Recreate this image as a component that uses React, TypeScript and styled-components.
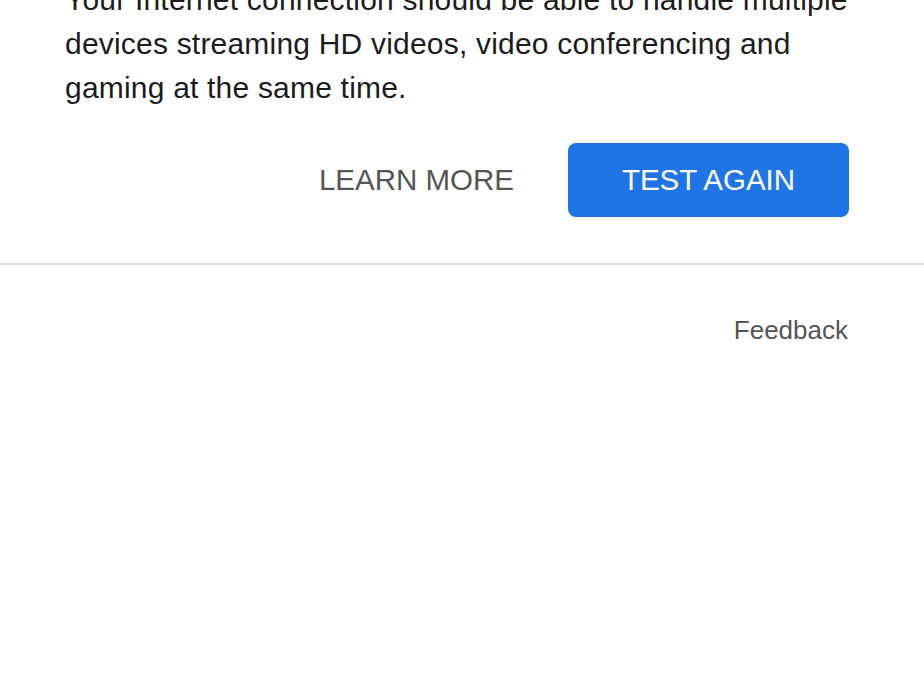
import React from "react";
import styled, { createGlobalStyle } from "styled-components";

const Global = createGlobalStyle`
  html, body { margin: 0; padding: 0; background: #ffffff; }
  body { font-family: "Liberation Sans", Arial, Helvetica, sans-serif; overflow: hidden; }
`;

const Page = styled.div`
  width: 924px;
  height: 700px;
  background: #fff;
  display: flex;
  flex-direction: column;
`;

const Result = styled.section`
  padding: 0 75px 46px 65px;
  display: flex;
  flex-direction: column;
`;

const Message = styled.p`
  margin: -22px -10px 0 0;
  font-size: 30px;
  line-height: 44px;
  color: #1c1c1c;
  letter-spacing: 0.2px;
`;

const Actions = styled.div`
  margin-top: 33px;
  display: flex;
  justify-content: flex-end;
  align-items: center;
  gap: 54px;
`;

const TextButton = styled.button`
  background: none;
  border: none;
  padding: 0;
  font-family: inherit;
  font-size: 29.5px;
  color: #555;
  cursor: pointer;
`;

const PrimaryButton = styled.button`
  width: 281px;
  height: 74px;
  border: none;
  border-radius: 8px;
  background: #1f74e6;
  color: #fff;
  font-family: inherit;
  font-size: 29.5px;
  cursor: pointer;
`;

const Divider = styled.hr`
  margin: 0;
  border: none;
  height: 2px;
  background: #e0e0e0;
`;

const Footer = styled.div`
  display: flex;
  justify-content: flex-end;
  padding: 50px 76px 0 0;
`;

const FeedbackLink = styled.a`
  font-size: 26px;
  color: #555;
  text-decoration: none;
`;

export default function App() {
  return (
    <>
      <Global />
      <Page>
        <Result>
          <Message>
            Your Internet connection should be able to handle multiple devices streaming HD videos, video
            conferencing and gaming at the same time.
          </Message>
          <Actions>
            <TextButton>LEARN MORE</TextButton>
            <PrimaryButton>TEST AGAIN</PrimaryButton>
          </Actions>
        </Result>
        <Divider />
        <Footer>
          <FeedbackLink href="#">Feedback</FeedbackLink>
        </Footer>
      </Page>
    </>
  );
}
